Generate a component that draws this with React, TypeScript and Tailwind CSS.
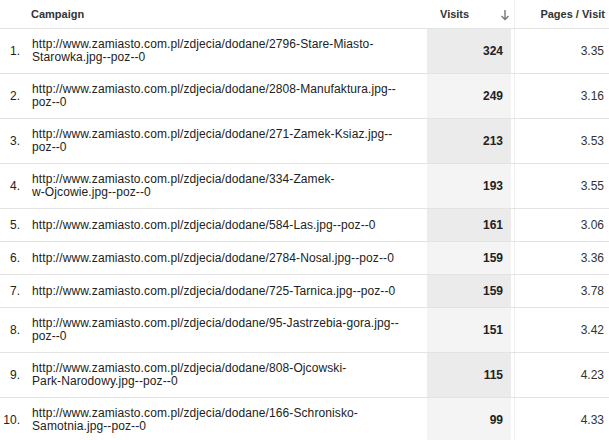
import React from "react";

const rows: { n: number; l1: string; l2?: string; v: string; p: string }[] = [
  { n: 1, l1: "http://www.zamiasto.com.pl/zdjecia/dodane/2796-Stare-Miasto-", l2: "Starowka.jpg--poz--0", v: "324", p: "3.35" },
  { n: 2, l1: "http://www.zamiasto.com.pl/zdjecia/dodane/2808-Manufaktura.jpg--", l2: "poz--0", v: "249", p: "3.16" },
  { n: 3, l1: "http://www.zamiasto.com.pl/zdjecia/dodane/271-Zamek-Ksiaz.jpg--", l2: "poz--0", v: "213", p: "3.53" },
  { n: 4, l1: "http://www.zamiasto.com.pl/zdjecia/dodane/334-Zamek-", l2: "w-Ojcowie.jpg--poz--0", v: "193", p: "3.55" },
  { n: 5, l1: "http://www.zamiasto.com.pl/zdjecia/dodane/584-Las.jpg--poz--0", v: "161", p: "3.06" },
  { n: 6, l1: "http://www.zamiasto.com.pl/zdjecia/dodane/2784-Nosal.jpg--poz--0", v: "159", p: "3.36" },
  { n: 7, l1: "http://www.zamiasto.com.pl/zdjecia/dodane/725-Tarnica.jpg--poz--0", v: "159", p: "3.78" },
  { n: 8, l1: "http://www.zamiasto.com.pl/zdjecia/dodane/95-Jastrzebia-gora.jpg--", l2: "poz--0", v: "151", p: "3.42" },
  { n: 9, l1: "http://www.zamiasto.com.pl/zdjecia/dodane/808-Ojcowski-", l2: "Park-Narodowy.jpg--poz--0", v: "115", p: "4.23" },
  { n: 10, l1: "http://www.zamiasto.com.pl/zdjecia/dodane/166-Schronisko-", l2: "Samotnia.jpg--poz--0", v: "99", p: "4.33" },
];

export default function App() {
  return (
    <div
      className="w-[609px] h-[440px] overflow-hidden bg-white text-[#222]"
      style={{ fontFamily: '"Liberation Sans", Arial, sans-serif' }}
    >
      {/* header */}
      <div className="grid grid-cols-[20px_407px_84px_4px_94px] h-[29px] border-b border-[#e3e3e3] text-[11px] font-bold text-[#333]">
        <div />
        <div className="flex items-center pl-[11px]">Campaign</div>
        <div className="flex items-center justify-between pl-[13px] pr-[1px]">
          <span>Visits</span>
          <svg width="10" height="12" viewBox="0 0 10 12" className="mt-[1px]">
            <path d="M5 1 V10.5 M1.5 7 L5 10.5 L8.5 7" stroke="#777" strokeWidth="1.4" fill="none" />
          </svg>
        </div>
        <div className="border-r border-[#f0f0f0]" />
        <div className="flex items-center justify-end pr-[4px]">Pages / Visit</div>
      </div>
      {rows.map((r, i) => (
        <div
          key={r.n}
          className="grid grid-cols-[20px_407px_84px_4px_94px] border-b border-[#e3e3e3] text-[12px] leading-[13px]"
        >
          <div className="flex items-center justify-end">{r.n}.</div>
          <div className={`pl-[12px] py-[9px] flex items-center tracking-[0.1px] ${r.l2 ? "" : "min-h-[32px]"}`}>
            <div>
              {r.l1}
              {r.l2 && <br />}
              {r.l2}
            </div>
          </div>
          <div
            className={`flex items-center justify-end pr-[8px] font-bold ${
              i % 2 === 0 ? "bg-[#ebebeb]" : "bg-[#f4f4f4]"
            }`}
          >
            {r.v}
          </div>
          <div className="border-r border-[#f0f0f0]" />
          <div className="flex items-center justify-end pr-[5px] text-[#333]">{r.p}</div>
        </div>
      ))}
    </div>
  );
}
